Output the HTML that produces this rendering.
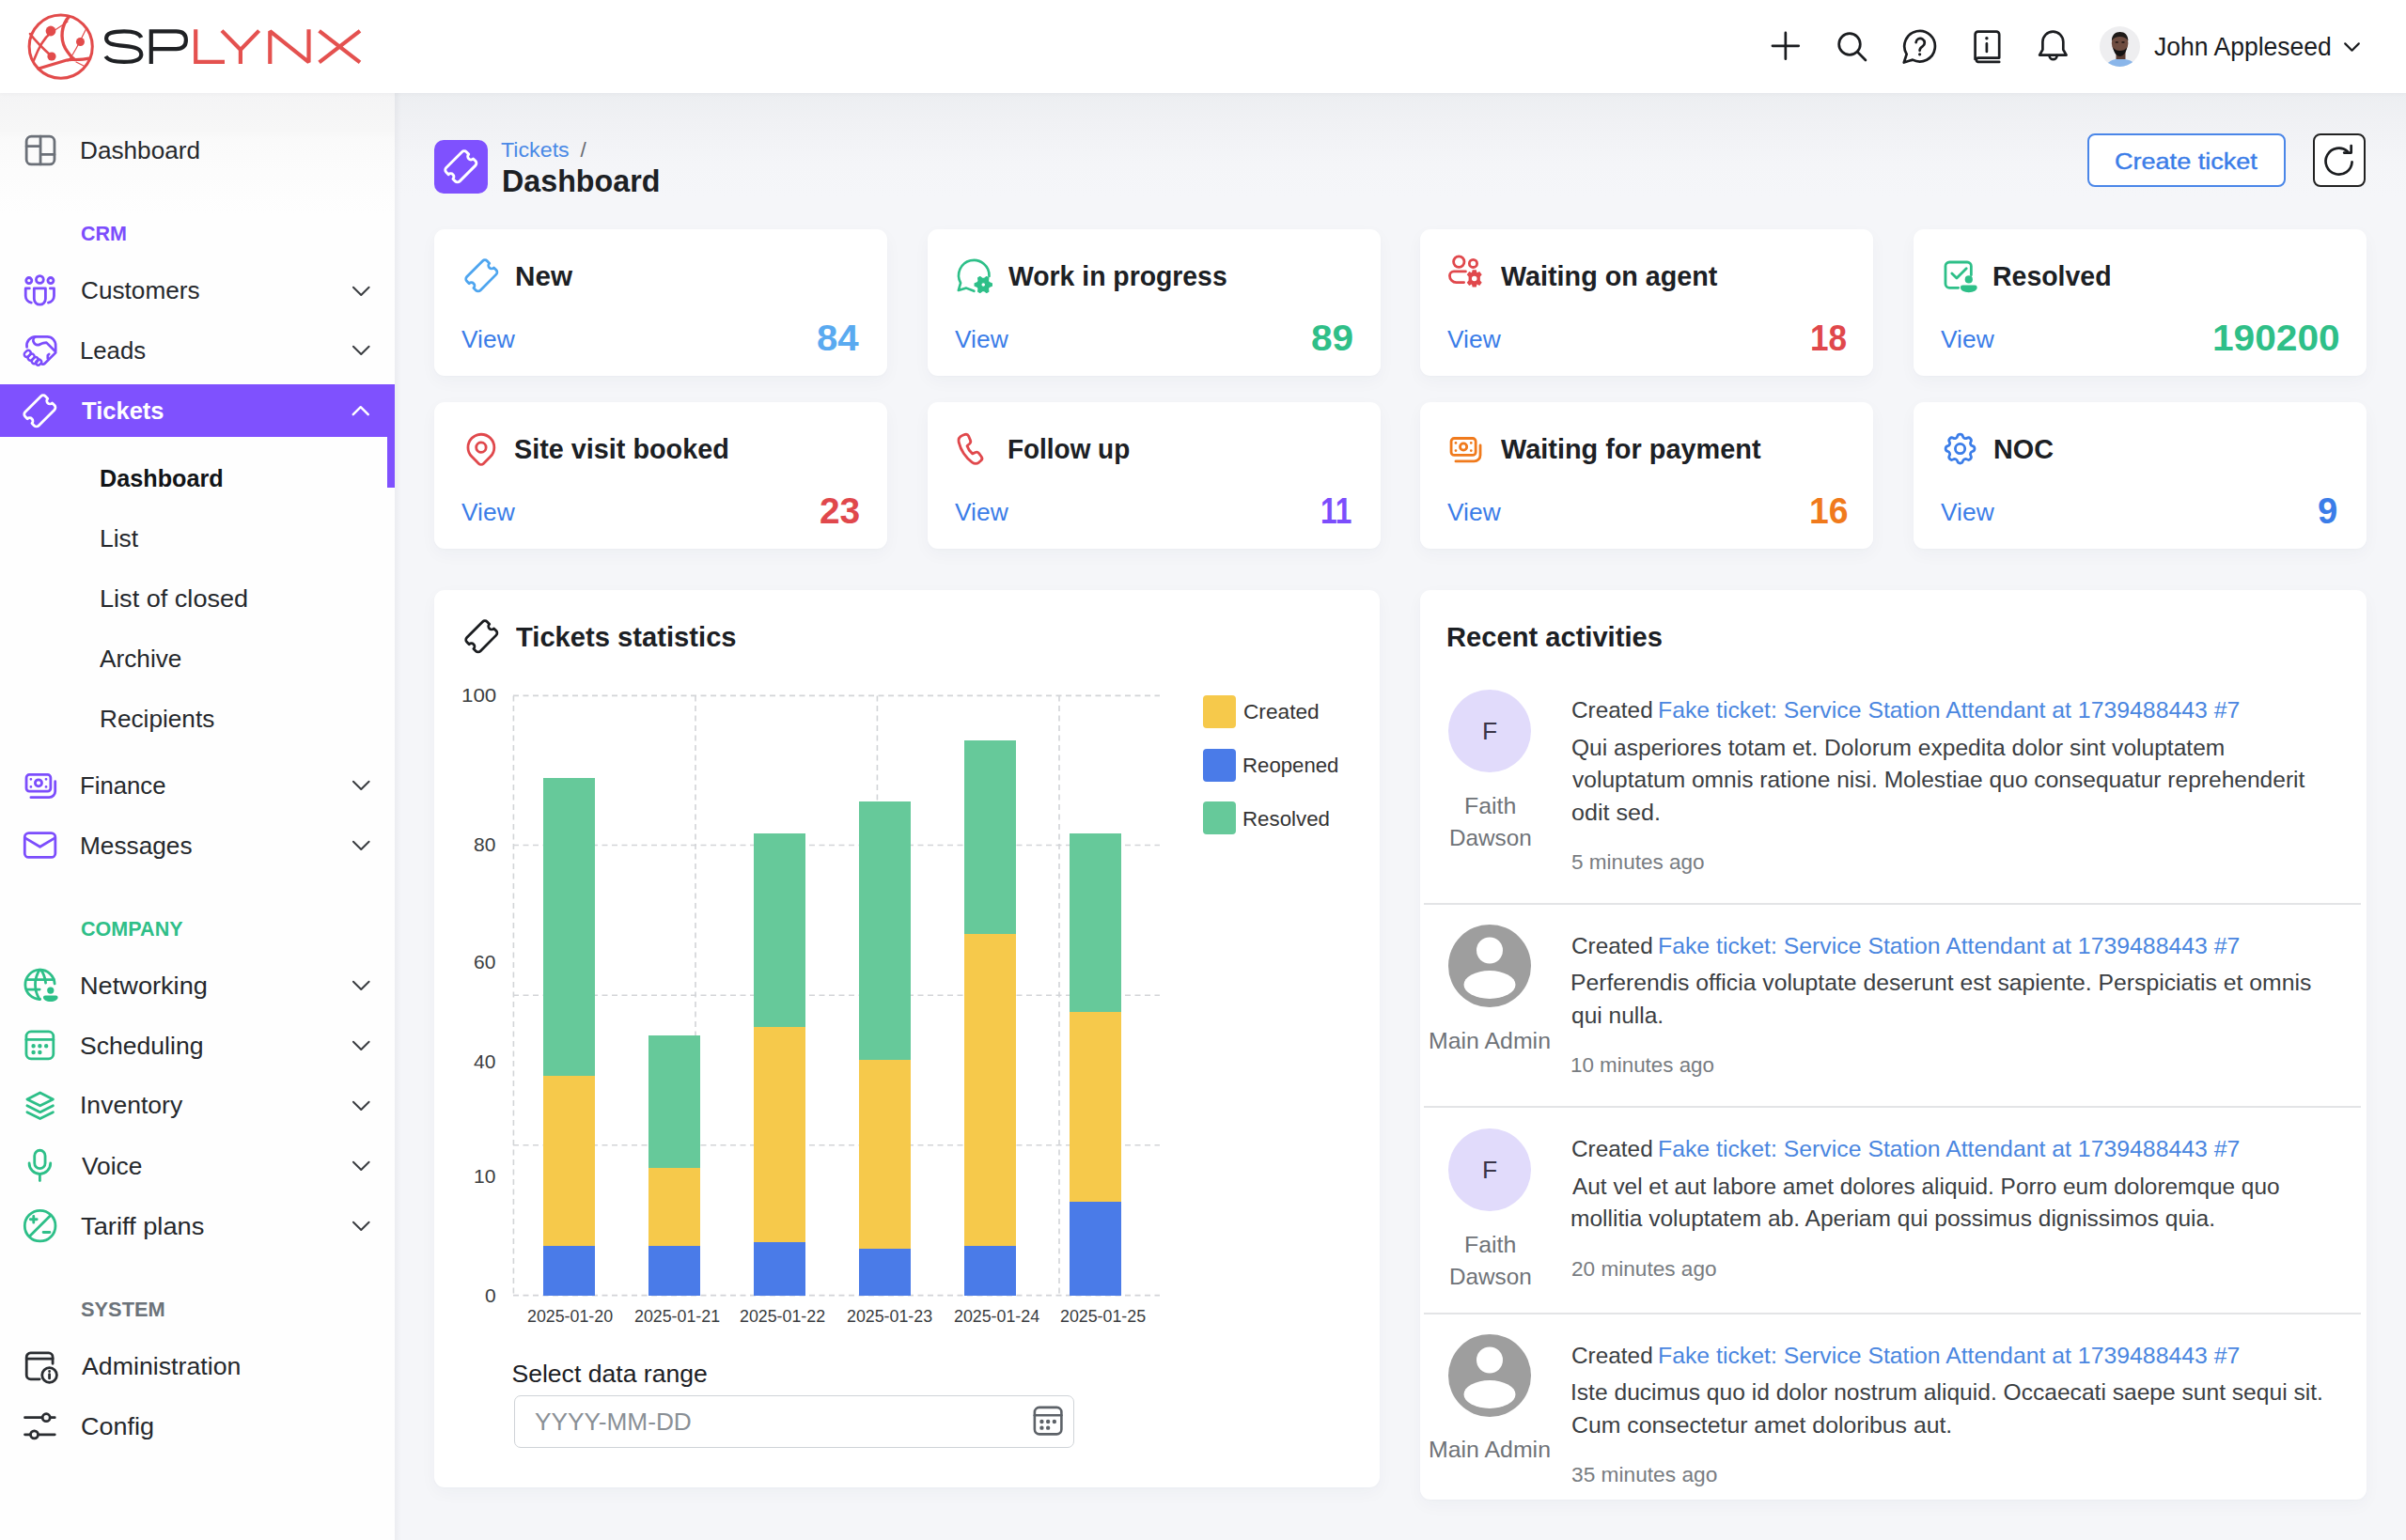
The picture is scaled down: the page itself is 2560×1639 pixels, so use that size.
<!DOCTYPE html><html><head><meta charset="utf-8"><style>
html,body{margin:0;padding:0}
body{width:2560px;height:1639px;overflow:hidden;position:relative;background:#f5f6f9;font-family:"Liberation Sans",sans-serif}
.b{position:absolute}
.ic{position:absolute;overflow:visible}
.t{position:absolute;white-space:pre;line-height:1;transform-origin:0 0}
</style></head><body>
<div class=b style="left:0px;top:99px;width:420px;height:1540px;background:linear-gradient(#f4f4f5 0px,#f7f7f7 40px,#fafafa 50px,#fcfcfc 85px,#fefefe 130px,#fefefe 100%)"></div>
<div class=b style="left:420px;top:99px;width:2140px;height:1540px;background:linear-gradient(#eceef1 0px,#f0f1f4 30px,#f4f5f8 75px,#f5f6f9 110px,#f5f6f9 100%)"></div>
<div class=b style="left:420px;top:99px;width:7px;height:1540px;background:linear-gradient(to right,rgba(30,30,60,.045),rgba(30,30,60,0))"></div>
<div class=b style="left:0px;top:0px;width:2560px;height:99px;background:#fff;box-shadow:0 1px 4px rgba(30,40,60,.035)"></div>
<svg class=ic style="left:28px;top:13px" width="72" height="72" viewBox="0 0 72 72" fill="none" stroke="#e24b4b" stroke-linecap="round">
<circle cx="36.7" cy="36.6" r="33.6" stroke-width="3"/>
<path d="M45.5 4.5c-8 9 -10 23 -4 34c3 5 6 9 10 12" stroke-width="3.4"/>
<path d="M52 50.5c6 0 11 -.5 15 -1.5" stroke-width="3"/>
<path d="M13 60c10 -3 20 -6 30 -9c3 -.8 6 -.8 9 -.5" stroke-width="3.2"/>
<path d="M4 23c6 8 12 14 22 23" stroke-width="2.6"/>
<path d="M26 22c-8 6 -13 16 -18 29" stroke-width="2.6"/>
<path d="M26 22l18 -12M57 31l7 -14M44 52c4 -4 8 -11 13 -21M53 53l8 4" stroke-width="1.2"/>
<circle cx="26" cy="20" r="5.4" fill="#e24b4b" stroke="none"/>
<circle cx="57.5" cy="31.5" r="4.5" fill="#e24b4b" stroke="none"/>
<circle cx="27" cy="47" r="4.6" fill="#e24b4b" stroke="none"/>
</svg>
<svg class=ic style="left:108px;top:28px" width="282" height="44" viewBox="0 0 282 44" fill="none" stroke-width="4.2" stroke-linecap="butt" stroke-linejoin="miter" stroke-miterlimit="2">
<path d="M42.3 12C40.5 7.5 34 5.3 24 5.3C12 5.3 5.1 7.5 5.1 12.8C5.1 18.5 11 19.6 24 20.8C36.5 22 42.3 24 42.3 30C42.3 35.8 36 37.9 24 37.9C12.5 37.9 6.5 35.5 4.4 32" stroke="#1f2124"/>
<path d="M52.8 40V5.3H79.5C86.5 5.3 89.9 8.5 89.9 14.7C89.9 21 86.5 24.1 79.5 24.1H52.8" stroke="#1f2124"/>
<path d="M100.2 3.2V37.9H131" stroke="#e4514f"/>
<path d="M128 4.6L147.9 25L167.6 4.6M147.9 25V40" stroke="#e4514f"/>
<path d="M179.3 40V5.2L220.5 38.2V3.2" stroke="#e4514f"/>
<path d="M231.6 4.8L275 38.4M275 4.8L231.6 38.4" stroke="#e4514f"/>
</svg>
<svg class=ic style="left:1879.15px;top:28.20px;color:#1b1d20" width="41.70" height="41.70" viewBox="0 0 24 24" fill="none" stroke="currentColor" stroke-width="1.554" stroke-linecap="round" stroke-linejoin="round"><path d="M12 4v16M4 12h16"/></svg>
<svg class=ic style="left:1951.12px;top:29.57px;color:#1b1d20" width="38.84" height="38.84" viewBox="0 0 24 24" fill="none" stroke="currentColor" stroke-width="1.668" stroke-linecap="round" stroke-linejoin="round"><circle cx="10.5" cy="10.5" r="7"/><path d="M15.8 15.8L21 21"/></svg>
<svg class=ic style="left:2015px;top:22px" width="200" height="55" viewBox="0 0 200 55" fill="none" stroke="#1b1d20" stroke-width="2.7" stroke-linecap="round" stroke-linejoin="round"><path d="M13.7 35.7A16.3 16.3 0 1 1 20 41.6L10.8 44.5Z"/><path d="M23.6 23.2A4.6 4.6 0 1 1 30.6 27.4C28.6 28.7 27.6 29.6 27.6 31.8"/><path d="M27.6 35.8v.01" stroke-width="3.2"/><path d="M86.6 41V14.7A3 3 0 0 1 89.6 11.7H109.2A3 3 0 0 1 112.2 14.7V39.6H89.6A2.2 2.2 0 0 0 89.6 43.9H112.2"/><path d="M98.9 18.7v.01" stroke-width="3.4"/><path d="M98.9 24.4V33"/><path d="M158.4 30.8V22.6A10.95 10.95 0 0 1 180.3 22.6V30.8L183.6 36.6H155.1Z"/><path d="M165.6 37.2A4 4 0 0 0 173.6 37.2"/></svg>
<svg class=ic style="left:2490.49px;top:36.91px;color:#1b1d20" width="25.03" height="25.03" viewBox="0 0 24 24" fill="none" stroke="currentColor" stroke-width="2.110" stroke-linecap="round" stroke-linejoin="round"><path d="M5 9l7 7l7 -7"/></svg>
<svg class=ic style="left:2234px;top:28px" width="43" height="43" viewBox="0 0 43 43">
<defs><clipPath id="avc"><circle cx="21.5" cy="21.5" r="21.5"/></clipPath></defs>
<g clip-path="url(#avc)"><rect width="43" height="43" fill="#eeeef0"/>
<path d="M7 41C10 36.5 16 34.6 21.6 34.2C27.5 34.6 33.5 35.8 37 39.5L38 43H7Z" fill="#8ab6ea"/>
<rect x="17.5" y="26" width="10" height="9" fill="#5a3d33"/>
<ellipse cx="21.6" cy="18" rx="8.8" ry="11" fill="#6e4c40"/>
<path d="M12.9 15.5C12.9 9 16.8 6 21.6 6C26.6 6 30.4 9 30.4 15.5C28.2 12 25.2 11 21.6 11C18 11 15 12 12.9 15.5Z" fill="#1e1a18"/>
<path d="M14.2 22.5C15.3 28.5 18.3 32 21.6 32C25 32 28 28.5 29.1 22.5C27.1 25 25 26 21.6 26C18.4 26 16.3 25 14.2 22.5Z" fill="#141212"/>
<ellipse cx="18.3" cy="17" rx="1.8" ry="1" fill="#2a1c18"/><ellipse cx="25" cy="17" rx="1.8" ry="1" fill="#2a1c18"/>
</g></svg>
<div class=b style="left:0px;top:409px;width:420px;height:56px;background:#7f51fe"></div>
<div class=b style="left:412px;top:465px;width:8px;height:54px;background:#7f51fe"></div>
<svg class=ic style="left:22.25px;top:139.35px;color:#6b7078" width="42.11" height="42.11" viewBox="0 0 24 24" fill="none" stroke="currentColor" stroke-width="1.596" stroke-linecap="round" stroke-linejoin="round"><rect x="3.5" y="3.5" width="17" height="17" rx="3"/><path d="M12 3.5v17M3.5 9.5h8.5M12 14.5h8.5"/></svg>
<svg class=ic style="left:21.34px;top:290.33px;color:#7c4dfc" width="42.72" height="42.72" viewBox="0 0 24 24" fill="none" stroke="currentColor" stroke-width="1.573" stroke-linecap="round" stroke-linejoin="round"><circle cx="5.5" cy="4.8" r="1.7"/><circle cx="12" cy="4.2" r="2.2"/><circle cx="18.5" cy="4.8" r="1.7"/><path d="M8.6 9.5h6.8v6.3a3.4 3.4 0 0 1 -6.8 0z"/><path d="M5.8 9.5h-2.3v4.6a4 4 0 0 0 3.4 3.9"/><path d="M18.2 9.5h2.3v4.6a4 4 0 0 1 -3.4 3.9"/></svg>
<svg class=ic style="left:22.24px;top:416.89px;color:#ffffff" width="40.71" height="40.71" viewBox="0 0 24 24" fill="none" stroke="currentColor" stroke-width="1.651" stroke-linecap="round" stroke-linejoin="round"><g transform="rotate(-45 12 12)"><path d="M5 6h14a2 2 0 0 1 2 2v2a2 2 0 0 0 0 4v2a2 2 0 0 1 -2 2h-14a2 2 0 0 1 -2 -2v-2a2 2 0 0 0 0 -4v-2a2 2 0 0 1 2 -2z"/></g></svg>
<svg class=ic style="left:23.62px;top:817.63px;color:#7c4dfc" width="38.76" height="38.76" viewBox="0 0 24 24" fill="none" stroke="currentColor" stroke-width="1.734" stroke-linecap="round" stroke-linejoin="round"><rect x="2.5" y="4" width="16" height="11" rx="2"/><circle cx="10.5" cy="9.5" r="2.2"/><path d="M5.5 7h.01M15.5 12h.01M5.5 12h.01M15.5 7h.01"/><path d="M21.5 8.5v6.5a4 4 0 0 1 -4 4h-12"/></svg>
<svg class=ic style="left:22.43px;top:878.83px;color:#7c4dfc" width="41.14" height="41.14" viewBox="0 0 24 24" fill="none" stroke="currentColor" stroke-width="1.633" stroke-linecap="round" stroke-linejoin="round"><rect x="2.5" y="4.5" width="19" height="15" rx="2.5"/><path d="M2.8 7.5l9.2 5.5l9.2 -5.5"/></svg>
<svg class=ic style="left:21.71px;top:1027.39px;color:#2dbf88" width="41.69" height="41.69" viewBox="0 0 24 24" fill="none" stroke="currentColor" stroke-width="1.612" stroke-linecap="round" stroke-linejoin="round"><path d="M20.8 11.5a9 9 0 1 0 -8.9 9.5"/><path d="M3.6 9h16.8M3.6 15h8"/><path d="M11.5 3a17 17 0 0 0 0 18"/><path d="M12.5 3a17 17 0 0 1 2.8 8"/><circle cx="18.3" cy="15.6" r="2.1" fill="currentColor" stroke="none"/><path d="M15 18.7h6.6a1.2 1.2 0 0 1 1.2 1.2c0 1.5 -2 2.6 -4.5 2.6s-4.5 -1.1 -4.5 -2.6a1.2 1.2 0 0 1 1.2 -1.2z" fill="currentColor" stroke="none"/></svg>
<svg class=ic style="left:22.21px;top:1092.46px;color:#2dbf88" width="40.77" height="40.77" viewBox="0 0 24 24" fill="none" stroke="currentColor" stroke-width="1.648" stroke-linecap="round" stroke-linejoin="round"><rect x="3.5" y="3.5" width="17" height="17" rx="3"/><path d="M3.5 8.5h17"/><path d="M8 12.5h.01M12 12.5h.01M16 12.5h.01M8 16.5h.01M12 16.5h.01" stroke-width="2.6"/></svg>
<svg class=ic style="left:21.63px;top:1156.64px;color:#2dbf88" width="41.34" height="41.34" viewBox="0 0 24 24" fill="none" stroke="currentColor" stroke-width="1.625" stroke-linecap="round" stroke-linejoin="round"><path d="M12 3.5l-8 4l8 4l8 -4z"/><path d="M4 11.5l8 4l8 -4"/><path d="M4 15.5l8 4l8 -4"/></svg>
<svg class=ic style="left:23.30px;top:1221.39px;color:#2dbf88" width="38.81" height="38.81" viewBox="0 0 24 24" fill="none" stroke="currentColor" stroke-width="1.732" stroke-linecap="round" stroke-linejoin="round"><rect x="8.5" y="2" width="7" height="12" rx="3.5"/><path d="M5 10.5a7 7 0 0 0 14 0"/><path d="M12 17.5v4.5"/></svg>
<svg class=ic style="left:21.91px;top:1284.06px;color:#2dbf88" width="41.28" height="41.28" viewBox="0 0 24 24" fill="none" stroke="currentColor" stroke-width="1.628" stroke-linecap="round" stroke-linejoin="round"><circle cx="12" cy="12" r="9.5"/><path d="M18.5 5.5l-13 13"/><path d="M8 6v4M6 8h4M14 16h4"/></svg>
<svg class=ic style="left:23.07px;top:1433.41px;color:#2a2d31" width="41.79" height="41.79" viewBox="0 0 24 24" fill="none" stroke="currentColor" stroke-width="1.608" stroke-linecap="round" stroke-linejoin="round"><path d="M11 20h-5.5a2.5 2.5 0 0 1 -2.5 -2.5v-11a2.5 2.5 0 0 1 2.5 -2.5h11a2.5 2.5 0 0 1 2.5 2.5v4"/><path d="M3 7.5h16"/><circle cx="17" cy="17.5" r="4.5"/><path d="M17 17v2.5M17 15.2v.01"/></svg>
<svg class=ic style="left:22.15px;top:1495.79px;color:#2a2d31" width="43.53" height="43.53" viewBox="0 0 24 24" fill="none" stroke="currentColor" stroke-width="1.544" stroke-linecap="round" stroke-linejoin="round"><path d="M2.5 7h17.5M2.5 17h17.5"/><circle cx="15" cy="7" r="2.2" fill="#fafafa"/><circle cx="8" cy="17" r="2.2" fill="#fafafa"/></svg>
<svg class=ic style="left:25px;top:357px" width="36" height="32" viewBox="0 0 36 32" fill="none" stroke="#7c4dfc" stroke-width="2.7" stroke-linecap="round" stroke-linejoin="round"><path d="M3.6 12.5C2.6 6.5 7 1.4 12.8 1.4H25.3C30.3 1.4 34.3 5.5 34.2 11V17"/><path d="M12.8 1.4C10.6 2.6 9.9 5.2 10.8 7.2C11.9 9.4 13.6 10.6 15.8 10.1C17.6 9.6 19.2 8.4 21 8.1L24.4 7.6L33.6 16.8"/><path d="M34.2 18.4L22.4 30C21.4 31 19.8 30.8 19 29.8"/><path d="M27.2 19.9L25.8 21.3V24.4"/><g stroke-width="2.4"><rect x="1.6" y="15.6" width="5.2" height="7.6" rx="2.6" transform="rotate(45 4.2 19.4)"/><rect x="5.6" y="19.4" width="5.2" height="7.6" rx="2.6" transform="rotate(45 8.2 23.2)"/><rect x="9.6" y="22.8" width="5.2" height="7.6" rx="2.6" transform="rotate(45 12.2 26.6)"/><rect x="13.6" y="25.4" width="5" height="6.4" rx="2.5" transform="rotate(45 16.1 28.6)"/></g></svg>
<svg class=ic style="left:369.78px;top:294.63px;color:#3a3d41" width="28.54" height="28.54" viewBox="0 0 24 24" fill="none" stroke="currentColor" stroke-width="1.682" stroke-linecap="round" stroke-linejoin="round"><path d="M5 9l7 7l7 -7"/></svg>
<svg class=ic style="left:369.78px;top:358.33px;color:#3a3d41" width="28.54" height="28.54" viewBox="0 0 24 24" fill="none" stroke="currentColor" stroke-width="1.682" stroke-linecap="round" stroke-linejoin="round"><path d="M5 9l7 7l7 -7"/></svg>
<svg class=ic style="left:369.78px;top:820.93px;color:#3a3d41" width="28.54" height="28.54" viewBox="0 0 24 24" fill="none" stroke="currentColor" stroke-width="1.682" stroke-linecap="round" stroke-linejoin="round"><path d="M5 9l7 7l7 -7"/></svg>
<svg class=ic style="left:369.78px;top:885.13px;color:#3a3d41" width="28.54" height="28.54" viewBox="0 0 24 24" fill="none" stroke="currentColor" stroke-width="1.682" stroke-linecap="round" stroke-linejoin="round"><path d="M5 9l7 7l7 -7"/></svg>
<svg class=ic style="left:369.78px;top:1033.53px;color:#3a3d41" width="28.54" height="28.54" viewBox="0 0 24 24" fill="none" stroke="currentColor" stroke-width="1.682" stroke-linecap="round" stroke-linejoin="round"><path d="M5 9l7 7l7 -7"/></svg>
<svg class=ic style="left:369.78px;top:1097.93px;color:#3a3d41" width="28.54" height="28.54" viewBox="0 0 24 24" fill="none" stroke="currentColor" stroke-width="1.682" stroke-linecap="round" stroke-linejoin="round"><path d="M5 9l7 7l7 -7"/></svg>
<svg class=ic style="left:369.78px;top:1161.63px;color:#3a3d41" width="28.54" height="28.54" viewBox="0 0 24 24" fill="none" stroke="currentColor" stroke-width="1.682" stroke-linecap="round" stroke-linejoin="round"><path d="M5 9l7 7l7 -7"/></svg>
<svg class=ic style="left:369.78px;top:1226.13px;color:#3a3d41" width="28.54" height="28.54" viewBox="0 0 24 24" fill="none" stroke="currentColor" stroke-width="1.682" stroke-linecap="round" stroke-linejoin="round"><path d="M5 9l7 7l7 -7"/></svg>
<svg class=ic style="left:369.78px;top:1290.13px;color:#3a3d41" width="28.54" height="28.54" viewBox="0 0 24 24" fill="none" stroke="currentColor" stroke-width="1.682" stroke-linecap="round" stroke-linejoin="round"><path d="M5 9l7 7l7 -7"/></svg>
<svg class=ic style="left:370.29px;top:423.82px;color:#ffffff" width="27.51" height="27.51" viewBox="0 0 24 24" fill="none" stroke="currentColor" stroke-width="2.093" stroke-linecap="round" stroke-linejoin="round"><path d="M5 15l7 -7l7 7"/></svg>
<div class=b style="left:462px;top:149px;width:57px;height:57px;background:#7f51fe;border-radius:10px"></div>
<svg class=ic style="left:470.32px;top:157.42px;color:#fff" width="40.65" height="40.65" viewBox="0 0 24 24" fill="none" stroke="currentColor" stroke-width="1.712" stroke-linecap="round" stroke-linejoin="round"><g transform="rotate(-45 12 12)"><path d="M5 6h14a2 2 0 0 1 2 2v2a2 2 0 0 0 0 4v2a2 2 0 0 1 -2 2h-14a2 2 0 0 1 -2 -2v-2a2 2 0 0 0 0 -4v-2a2 2 0 0 1 2 -2z"/></g></svg>
<div class=b style="left:2221px;top:142px;width:211px;height:57px;background:#fff;border:2px solid #4a86e8;border-radius:8px;box-sizing:border-box"></div>
<div class=b style="left:2461px;top:142px;width:56px;height:57px;background:#fff;border:2px solid #222;border-radius:8px;box-sizing:border-box"></div>
<svg class=ic style="left:2467.14px;top:149.95px;color:#1b1d20" width="43.13" height="43.13" viewBox="0 0 24 24" fill="none" stroke="currentColor" stroke-width="1.503" stroke-linecap="round" stroke-linejoin="round"><path d="M19.8 12.5a7.8 7.8 0 1 1 -2.6 -6.3"/><path d="M19.3 2.8v4.2h-4.2"/></svg>
<div class=b style="left:462px;top:244px;width:482px;height:156px;background:#fff;border-radius:11px;box-shadow:0 6px 18px rgba(40,50,80,.035),0 1px 3px rgba(40,50,80,.02)"></div>
<div class=b style="left:987px;top:244px;width:482px;height:156px;background:#fff;border-radius:11px;box-shadow:0 6px 18px rgba(40,50,80,.035),0 1px 3px rgba(40,50,80,.02)"></div>
<div class=b style="left:1511px;top:244px;width:482px;height:156px;background:#fff;border-radius:11px;box-shadow:0 6px 18px rgba(40,50,80,.035),0 1px 3px rgba(40,50,80,.02)"></div>
<div class=b style="left:2036px;top:244px;width:482px;height:156px;background:#fff;border-radius:11px;box-shadow:0 6px 18px rgba(40,50,80,.035),0 1px 3px rgba(40,50,80,.02)"></div>
<div class=b style="left:462px;top:428px;width:482px;height:156px;background:#fff;border-radius:11px;box-shadow:0 6px 18px rgba(40,50,80,.035),0 1px 3px rgba(40,50,80,.02)"></div>
<div class=b style="left:987px;top:428px;width:482px;height:156px;background:#fff;border-radius:11px;box-shadow:0 6px 18px rgba(40,50,80,.035),0 1px 3px rgba(40,50,80,.02)"></div>
<div class=b style="left:1511px;top:428px;width:482px;height:156px;background:#fff;border-radius:11px;box-shadow:0 6px 18px rgba(40,50,80,.035),0 1px 3px rgba(40,50,80,.02)"></div>
<div class=b style="left:2036px;top:428px;width:482px;height:156px;background:#fff;border-radius:11px;box-shadow:0 6px 18px rgba(40,50,80,.035),0 1px 3px rgba(40,50,80,.02)"></div>
<svg class=ic style="left:491.67px;top:272.67px;color:#4ea5ef" width="40.65" height="40.65" viewBox="0 0 24 24" fill="none" stroke="currentColor" stroke-width="1.653" stroke-linecap="round" stroke-linejoin="round"><g transform="rotate(-45 12 12)"><path d="M5 6h14a2 2 0 0 1 2 2v2a2 2 0 0 0 0 4v2a2 2 0 0 1 -2 2h-14a2 2 0 0 1 -2 -2v-2a2 2 0 0 0 0 -4v-2a2 2 0 0 1 2 -2z"/></g></svg>
<svg class=ic style="left:1538.12px;top:267.00px;color:#e0484c" width="42.88" height="42.88" viewBox="0 0 24 24" fill="none" stroke="currentColor" stroke-width="1.567" stroke-linecap="round" stroke-linejoin="round"><circle cx="8" cy="6.5" r="3.2"/><circle cx="16.5" cy="7.5" r="2.3"/><path d="M12 12.3h-7a2.5 2.5 0 0 0 -2.5 2.5a4 4 0 0 0 4 4h4.5"/><g transform="translate(17.2 16.5) scale(0.52)"><path fill="currentColor" stroke="none" fill-rule="evenodd" d="M-2.2 -9.8 L2.2 -9.8 L3 -6.6 L5.9 -8.1 L8.6 -4.6 L6.6 -2.2 L6.6 2.2 L8.6 4.6 L5.9 8.1 L3 6.6 L2.2 9.8 L-2.2 9.8 L-3 6.6 L-5.9 8.1 L-8.6 4.6 L-6.6 2.2 L-6.6 -2.2 L-8.6 -4.6 L-5.9 -8.1 L-3 -6.6 Z M0 -3 A3 3 0 1 0 0 3 A3 3 0 1 0 0 -3 Z"/></g></svg>
<svg class=ic style="left:2064.20px;top:272.97px;color:#2dbf88" width="41.06" height="41.06" viewBox="0 0 24 24" fill="none" stroke="currentColor" stroke-width="1.637" stroke-linecap="round" stroke-linejoin="round"><path d="M19.5 11.5v-5.5a2.5 2.5 0 0 0 -2.5 -2.5h-11a2.5 2.5 0 0 0 -2.5 2.5v11a2.5 2.5 0 0 0 2.5 2.5h5.5"/><path d="M7.5 10.5l3 3l6 -6"/><circle cx="18" cy="14.3" r="2.4" fill="currentColor" stroke="none"/><path d="M14.2 17.9h7.6a1.4 1.4 0 0 1 1.4 1.4c0 1.7 -2.3 3 -5.2 3s-5.2 -1.3 -5.2 -3a1.4 1.4 0 0 1 1.4 -1.4z" fill="currentColor" stroke="none"/></svg>
<svg class=ic style="left:491.24px;top:456.75px;color:#e0484c" width="41.82" height="41.82" viewBox="0 0 24 24" fill="none" stroke="currentColor" stroke-width="1.607" stroke-linecap="round" stroke-linejoin="round"><path d="M9 11a3 3 0 1 0 6 0a3 3 0 0 0 -6 0"/><path d="M17.657 16.657l-4.243 4.243a2 2 0 0 1 -2.827 0l-4.244 -4.243a8 8 0 1 1 11.314 0z"/></svg>
<svg class=ic style="left:1013.13px;top:458.29px;color:#e0484c" width="38.03" height="38.03" viewBox="0 0 24 24" fill="none" stroke="currentColor" stroke-width="1.767" stroke-linecap="round" stroke-linejoin="round"><path d="M7.2 3.3l1.5 -.5a2 2 0 0 1 2.4 1.1l1.2 2.8a2 2 0 0 1 -.5 2.3l-1.7 1.4a11 11 0 0 0 3.6 5.3l2 -.9a2 2 0 0 1 2.3 .6l1.7 2.3a2 2 0 0 1 -.3 2.7l-1.3 1.1c-1.3 1 -3.2 1 -4.6 0c-4.6 -3.4 -7.6 -8 -9 -13.5c-.4 -1.9 .4 -3.8 2.7 -4.7z"/></svg>
<svg class=ic style="left:1539.60px;top:460.26px;color:#f07a1c" width="39.11" height="39.11" viewBox="0 0 24 24" fill="none" stroke="currentColor" stroke-width="1.718" stroke-linecap="round" stroke-linejoin="round"><rect x="2.5" y="4" width="16" height="11" rx="2"/><circle cx="10.5" cy="9.5" r="2.2"/><path d="M5.5 7h.01M15.5 12h.01M5.5 12h.01M15.5 7h.01"/><path d="M21.5 8.5v6.5a4 4 0 0 1 -4 4h-12"/></svg>
<svg class=ic style="left:2064.66px;top:457.41px;color:#3b7de8" width="41.17" height="41.17" viewBox="0 0 24 24" fill="none" stroke="currentColor" stroke-width="1.632" stroke-linecap="round" stroke-linejoin="round"><path d="M10.325 4.317c.426 -1.756 2.924 -1.756 3.35 0a1.724 1.724 0 0 0 2.573 1.066c1.543 -.94 3.31 .826 2.37 2.37a1.724 1.724 0 0 0 1.065 2.572c1.756 .426 1.756 2.924 0 3.35a1.724 1.724 0 0 0 -1.066 2.573c.94 1.543 -.826 3.31 -2.37 2.37a1.724 1.724 0 0 0 -2.572 1.065c-.426 1.756 -2.924 1.756 -3.35 0a1.724 1.724 0 0 0 -2.573 -1.066c-1.543 .94 -3.31 -.826 -2.37 -2.37a1.724 1.724 0 0 0 -1.065 -2.572c-1.756 -.426 -1.756 -2.924 0 -3.35a1.724 1.724 0 0 0 1.066 -2.573c-.94 -1.543 .826 -3.31 2.37 -2.37c1 .608 2.296 .07 2.572 -1.065z"/><circle cx="12" cy="12" r="3"/></svg>
<svg class=ic style="left:1010px;top:265px" width="60" height="55" viewBox="0 0 60 55" fill="none" stroke="#2dbf88" stroke-width="2.6" stroke-linecap="round" stroke-linejoin="round"><path d="M42.5 29A16.25 16.25 0 1 0 12.1 36.1L9.8 44L18.2 41.6L26.4 44.8"/><path fill="#2dbf88" stroke="#2dbf88" stroke-width="1.2" fill-rule="evenodd" d="M45.37 36.80 L45.37 39.20 L42.35 40.53 L41.49 42.02 L41.85 45.30 L39.77 46.50 L37.11 44.54 L35.39 44.54 L32.73 46.50 L30.65 45.30 L31.01 42.02 L30.15 40.53 L27.13 39.20 L27.13 36.80 L30.15 35.47 L31.01 33.98 L30.65 30.70 L32.73 29.50 L35.39 31.46 L37.11 31.46 L39.77 29.50 L41.85 30.70 L41.49 33.98 L42.35 35.47 Z M38.65 38 A2.4 2.4 0 1 0 33.85 38 A2.4 2.4 0 1 0 38.65 38 Z"/></svg>
<div class=b style="left:462px;top:628px;width:1006px;height:955px;background:#fff;border-radius:11px;box-shadow:0 6px 18px rgba(40,50,80,.035),0 1px 3px rgba(40,50,80,.02)"></div>
<svg class=ic style="left:491.67px;top:656.67px;color:#1b1d20" width="40.65" height="40.65" viewBox="0 0 24 24" fill="none" stroke="currentColor" stroke-width="1.653" stroke-linecap="round" stroke-linejoin="round"><g transform="rotate(-45 12 12)"><path d="M5 6h14a2 2 0 0 1 2 2v2a2 2 0 0 0 0 4v2a2 2 0 0 1 -2 2h-14a2 2 0 0 1 -2 -2v-2a2 2 0 0 0 0 -4v-2a2 2 0 0 1 2 -2z"/></g></svg>
<svg class=ic style="left:0;top:0" width="2560" height="1639" stroke="#d2d4d7" stroke-width="1.6" stroke-dasharray="6 4.5"><line x1="546" y1="740.4" x2="1234" y2="740.4"/><line x1="546" y1="899.5" x2="1234" y2="899.5"/><line x1="546" y1="1059.2" x2="1234" y2="1059.2"/><line x1="546" y1="1218.8" x2="1234" y2="1218.8"/><line x1="546" y1="1378.6" x2="1234" y2="1378.6"/><line x1="546.4" y1="740.4" x2="546.4" y2="1378.6"/><line x1="740" y1="740.4" x2="740" y2="1378.6"/><line x1="933.4" y1="740.4" x2="933.4" y2="1378.6"/><line x1="1127" y1="740.4" x2="1127" y2="1378.6"/></svg>
<svg class=ic style="left:0;top:0" width="2560" height="1639" shape-rendering="crispEdges"><rect x="577.7" y="828" width="55" height="317.29999999999995" fill="#66c99a"/><rect x="577.7" y="1144.8" width="55" height="181.70000000000005" fill="#f6c94b"/><rect x="577.7" y="1326" width="55" height="52.59999999999991" fill="#4a7be8"/><rect x="690" y="1102.3" width="55" height="140.70000000000005" fill="#66c99a"/><rect x="690" y="1242.5" width="55" height="84.0" fill="#f6c94b"/><rect x="690" y="1326" width="55" height="52.59999999999991" fill="#4a7be8"/><rect x="802" y="887" width="55" height="206.5" fill="#66c99a"/><rect x="802" y="1093" width="55" height="229.5" fill="#f6c94b"/><rect x="802" y="1322" width="55" height="56.59999999999991" fill="#4a7be8"/><rect x="913.8" y="853" width="55" height="275.5" fill="#66c99a"/><rect x="913.8" y="1128" width="55" height="201.20000000000005" fill="#f6c94b"/><rect x="913.8" y="1328.7" width="55" height="49.899999999999864" fill="#4a7be8"/><rect x="1026" y="787.8" width="55" height="206.5" fill="#66c99a"/><rect x="1026" y="993.8" width="55" height="332.70000000000005" fill="#f6c94b"/><rect x="1026" y="1326" width="55" height="52.59999999999991" fill="#4a7be8"/><rect x="1138" y="887" width="55" height="190.5" fill="#66c99a"/><rect x="1138" y="1077" width="55" height="202.5" fill="#f6c94b"/><rect x="1138" y="1279" width="55" height="99.59999999999991" fill="#4a7be8"/></svg>
<div class=b style="left:1280px;top:740px;width:35px;height:35px;background:#f6c94b;border-radius:4px"></div>
<div class=b style="left:1280px;top:797px;width:35px;height:35px;background:#4a7be8;border-radius:4px"></div>
<div class=b style="left:1280px;top:853px;width:35px;height:35px;background:#66c99a;border-radius:4px"></div>
<div class=b style="left:547px;top:1485px;width:596px;height:56px;background:#fff;border:1.5px solid #cfd3d7;border-radius:7px;box-sizing:border-box"></div>
<svg class=ic style="left:1095.16px;top:1492.21px;color:#5d6268" width="40.28" height="40.28" viewBox="0 0 24 24" fill="none" stroke="currentColor" stroke-width="1.549" stroke-linecap="round" stroke-linejoin="round"><rect x="3.5" y="3.5" width="17" height="17" rx="3"/><path d="M3.5 8.5h17"/><path d="M8 12.5h.01M12 12.5h.01M16 12.5h.01M8 16.5h.01M12 16.5h.01" stroke-width="2.6"/></svg>
<div class=b style="left:1511px;top:628px;width:1007px;height:968px;background:#fff;border-radius:11px;box-shadow:0 6px 18px rgba(40,50,80,.035),0 1px 3px rgba(40,50,80,.02)"></div>
<div class=b style="left:1515px;top:961px;width:997px;height:2px;background:#e3e4e6"></div>
<div class=b style="left:1515px;top:1177px;width:997px;height:2px;background:#e3e4e6"></div>
<div class=b style="left:1515px;top:1397px;width:997px;height:2px;background:#e3e4e6"></div>
<div class=b style="left:1541px;top:734px;width:88px;height:88px;background:#e1dbfb;border-radius:50%"></div>
<div class=t style="left:1541px;top:734px;width:88px;height:88px;line-height:88px;text-align:center;font-size:26.5px;color:#3a3547">F</div>
<svg class=ic style="left:1541px;top:984.4px" width="88" height="88" viewBox="0 0 88 88"><circle cx="44" cy="44" r="44" fill="#9e9e9e"/><circle cx="44" cy="27.5" r="14" fill="#fff"/><ellipse cx="44" cy="64" rx="27.5" ry="15" fill="#fff"/></svg>
<div class=b style="left:1541px;top:1201px;width:88px;height:88px;background:#e1dbfb;border-radius:50%"></div>
<div class=t style="left:1541px;top:1201px;width:88px;height:88px;line-height:88px;text-align:center;font-size:26.5px;color:#3a3547">F</div>
<svg class=ic style="left:1541px;top:1419.7px" width="88" height="88" viewBox="0 0 88 88"><circle cx="44" cy="44" r="44" fill="#9e9e9e"/><circle cx="44" cy="27.5" r="14" fill="#fff"/><ellipse cx="44" cy="64" rx="27.5" ry="15" fill="#fff"/></svg>
<div class=t style='left:2291.51px;top:37.09px;font-size:26.76px;font-weight:400;color:#1a1c1f;transform:scaleX(0.9920);'>John Appleseed</div>
<div class=t style='left:533.47px;top:148.95px;font-size:22.55px;font-weight:400;color:#4a89e6;transform:scaleX(1.0305);'>Tickets</div>
<div class=t style='left:617.40px;top:148.99px;font-size:22.5px;font-weight:400;color:#666a70;'>/</div>
<div class=t style='left:534.17px;top:175.73px;font-size:33.45px;font-weight:700;color:#1c2024;transform:scaleX(0.9643);'>Dashboard</div>
<div class=t style='left:2249.91px;top:160.20px;font-size:24.73px;font-weight:400;color:#3b7de8;transform:scaleX(1.0942);-webkit-text-stroke:0.4px currentColor;'>Create ticket</div>
<div class=t style='left:547.84px;top:279.14px;font-size:30.25px;font-weight:700;color:#1c2024;transform:scaleX(0.9801);'>New</div>
<div class=t style='left:491.19px;top:348.01px;font-size:26.5px;font-weight:400;color:#3b7de8;transform:scaleX(0.9951);'>View</div>
<div class=t style='left:869.35px;top:341.14px;font-size:38.3px;font-weight:700;color:#5aaaf0;transform:scaleX(1.0488);'>84</div>
<div class=t style='left:1072.70px;top:279.14px;font-size:30.25px;font-weight:700;color:#1c2024;transform:scaleX(0.9373);'>Work in progress</div>
<div class=t style='left:1016.19px;top:348.01px;font-size:26.5px;font-weight:400;color:#3b7de8;transform:scaleX(0.9951);'>View</div>
<div class=t style='left:1395.04px;top:341.14px;font-size:38.3px;font-weight:700;color:#2fbf88;transform:scaleX(1.0601);'>89</div>
<div class=t style='left:1596.70px;top:279.14px;font-size:30.25px;font-weight:700;color:#1c2024;transform:scaleX(0.9500);'>Waiting on agent</div>
<div class=t style='left:1540.19px;top:348.01px;font-size:26.5px;font-weight:400;color:#3b7de8;transform:scaleX(0.9951);'>View</div>
<div class=t style='left:1925.97px;top:341.14px;font-size:38.3px;font-weight:700;color:#e0484c;transform:scaleX(0.9183);'>18</div>
<div class=t style='left:2120.22px;top:279.14px;font-size:30.25px;font-weight:700;color:#1c2024;transform:scaleX(0.9412);'>Resolved</div>
<div class=t style='left:2065.19px;top:348.01px;font-size:26.5px;font-weight:400;color:#3b7de8;transform:scaleX(0.9951);'>View</div>
<div class=t style='left:2353.77px;top:341.14px;font-size:38.3px;font-weight:700;color:#2fbf88;transform:scaleX(1.0621);'>190200</div>
<div class=t style='left:547.45px;top:463.14px;font-size:30.25px;font-weight:700;color:#1c2024;transform:scaleX(0.9517);'>Site visit booked</div>
<div class=t style='left:491.19px;top:532.01px;font-size:26.5px;font-weight:400;color:#3b7de8;transform:scaleX(0.9951);'>View</div>
<div class=t style='left:871.58px;top:525.14px;font-size:38.3px;font-weight:700;color:#e0484c;transform:scaleX(1.0153);'>23</div>
<div class=t style='left:1071.85px;top:463.14px;font-size:30.25px;font-weight:700;color:#1c2024;transform:scaleX(0.9225);'>Follow up</div>
<div class=t style='left:1016.19px;top:532.01px;font-size:26.5px;font-weight:400;color:#3b7de8;transform:scaleX(0.9951);'>View</div>
<div class=t style='left:1405.35px;top:525.14px;font-size:38.3px;font-weight:700;color:#7c4dfc;transform:scaleX(0.8268);'>11</div>
<div class=t style='left:1596.70px;top:463.14px;font-size:30.25px;font-weight:700;color:#1c2024;transform:scaleX(0.9550);'>Waiting for payment</div>
<div class=t style='left:1540.19px;top:532.01px;font-size:26.5px;font-weight:400;color:#3b7de8;transform:scaleX(0.9951);'>View</div>
<div class=t style='left:1924.55px;top:525.14px;font-size:38.3px;font-weight:700;color:#f07a1c;transform:scaleX(0.9744);'>16</div>
<div class=t style='left:2121.19px;top:463.14px;font-size:30.25px;font-weight:700;color:#1c2024;transform:scaleX(0.9517);'>NOC</div>
<div class=t style='left:2065.19px;top:532.01px;font-size:26.5px;font-weight:400;color:#3b7de8;transform:scaleX(0.9951);'>View</div>
<div class=t style='left:2465.90px;top:525.14px;font-size:38.3px;font-weight:700;color:#3b7de8;'>9</div>
<div class=t style='left:85.17px;top:147.90px;font-size:25.8px;font-weight:400;color:#25282c;transform:scaleX(1.0148);'>Dashboard</div>
<div class=t style='left:86.08px;top:297.20px;font-size:25.8px;font-weight:400;color:#25282c;transform:scaleX(1.0155);'>Customers</div>
<div class=t style='left:85.21px;top:361.00px;font-size:25.8px;font-weight:400;color:#25282c;transform:scaleX(0.9971);'>Leads</div>
<div class=t style='left:85.20px;top:824.00px;font-size:25.8px;font-weight:400;color:#25282c;transform:scaleX(0.9968);'>Finance</div>
<div class=t style='left:85.17px;top:887.70px;font-size:25.8px;font-weight:400;color:#25282c;transform:scaleX(1.0165);'>Messages</div>
<div class=t style='left:85.09px;top:1037.00px;font-size:25.8px;font-weight:400;color:#25282c;transform:scaleX(1.0528);'>Networking</div>
<div class=t style='left:85.04px;top:1100.70px;font-size:25.8px;font-weight:400;color:#25282c;transform:scaleX(1.0298);'>Scheduling</div>
<div class=t style='left:85.14px;top:1164.20px;font-size:25.8px;font-weight:400;color:#25282c;transform:scaleX(1.0288);'>Inventory</div>
<div class=t style='left:86.60px;top:1228.60px;font-size:25.8px;font-weight:400;color:#25282c;transform:scaleX(1.0210);'>Voice</div>
<div class=t style='left:85.54px;top:1292.70px;font-size:25.8px;font-weight:400;color:#25282c;transform:scaleX(1.0574);'>Tariff plans</div>
<div class=t style='left:86.60px;top:1442.20px;font-size:25.8px;font-weight:400;color:#25282c;transform:scaleX(1.0364);'>Administration</div>
<div class=t style='left:86.05px;top:1506.20px;font-size:25.8px;font-weight:400;color:#25282c;transform:scaleX(1.0458);'>Config</div>
<div class=t style='left:86.50px;top:425.44px;font-size:25.4px;font-weight:700;color:#ffffff;transform:scaleX(1.0058);'>Tickets</div>
<div class=t style='left:85.54px;top:237.94px;font-size:22.2px;font-weight:700;color:#7c4dfc;transform:scaleX(0.9689);'>CRM</div>
<div class=t style='left:85.53px;top:977.74px;font-size:22.2px;font-weight:700;color:#2fbf88;transform:scaleX(0.9718);'>COMPANY</div>
<div class=t style='left:85.51px;top:1382.74px;font-size:22.2px;font-weight:700;color:#6c737a;transform:scaleX(0.9832);'>SYSTEM</div>
<div class=t style='left:106.05px;top:497.20px;font-size:25.8px;font-weight:700;color:#111417;transform:scaleX(0.9771);'>Dashboard</div>
<div class=t style='left:105.95px;top:560.70px;font-size:25.8px;font-weight:400;color:#25282c;transform:scaleX(1.0263);'>List</div>
<div class=t style='left:105.90px;top:625.00px;font-size:25.8px;font-weight:400;color:#25282c;transform:scaleX(1.0503);'>List of closed</div>
<div class=t style='left:106.40px;top:688.70px;font-size:25.8px;font-weight:400;color:#25282c;transform:scaleX(1.0165);'>Archive</div>
<div class=t style='left:105.97px;top:752.70px;font-size:25.8px;font-weight:400;color:#25282c;transform:scaleX(1.0153);'>Recipients</div>
<div class=t style='left:549.00px;top:662.82px;font-size:29.8px;font-weight:700;color:#1c2024;transform:scaleX(0.9790);'>Tickets statistics</div>
<div class=t style='left:544.40px;top:1448.62px;font-size:26.6px;font-weight:400;color:#1c2024;'>Select data range</div>
<div class=t style='left:569.11px;top:1500.32px;font-size:26.6px;font-weight:400;color:#8a9096;transform:scaleX(0.9874);'>YYYY-MM-DD</div>
<div class=t style='left:1322.96px;top:746.78px;font-size:21.8px;font-weight:400;color:#333;transform:scaleX(1.0400);'>Created</div>
<div class=t style='left:1321.96px;top:803.78px;font-size:21.8px;font-weight:400;color:#333;transform:scaleX(1.0186);'>Reopened</div>
<div class=t style='left:1321.95px;top:860.78px;font-size:21.8px;font-weight:400;color:#333;transform:scaleX(1.0227);'>Resolved</div>
<div class=t style='left:490.88px;top:728.65px;font-size:21.0px;font-weight:400;color:#3a3d40;transform:scaleX(1.0625);'>100</div>
<div class=t style='left:504.00px;top:888.25px;font-size:21.0px;font-weight:400;color:#3a3d40;'>80</div>
<div class=t style='left:504.00px;top:1012.75px;font-size:21.0px;font-weight:400;color:#3a3d40;'>60</div>
<div class=t style='left:504.00px;top:1119.26px;font-size:21.0px;font-weight:400;color:#3a3d40;'>40</div>
<div class=t style='left:504.00px;top:1241.05px;font-size:21.0px;font-weight:400;color:#3a3d40;'>10</div>
<div class=t style='left:516.00px;top:1367.76px;font-size:21.0px;font-weight:400;color:#3a3d40;'>0</div>
<div class=t style='left:560.98px;top:1392.71px;font-size:17.5px;font-weight:400;color:#3a3d40;transform:scaleX(1.0171);'>2025-01-20</div>
<div class=t style='left:675.19px;top:1392.71px;font-size:17.5px;font-weight:400;color:#3a3d40;transform:scaleX(1.0171);'>2025-01-21</div>
<div class=t style='left:786.98px;top:1392.71px;font-size:17.5px;font-weight:400;color:#3a3d40;transform:scaleX(1.0171);'>2025-01-22</div>
<div class=t style='left:900.78px;top:1392.71px;font-size:17.5px;font-weight:400;color:#3a3d40;transform:scaleX(1.0171);'>2025-01-23</div>
<div class=t style='left:1015.09px;top:1392.71px;font-size:17.5px;font-weight:400;color:#3a3d40;transform:scaleX(1.0171);'>2025-01-24</div>
<div class=t style='left:1128.19px;top:1392.71px;font-size:17.5px;font-weight:400;color:#3a3d40;transform:scaleX(1.0171);'>2025-01-25</div>
<div class=t style='left:1539.24px;top:662.82px;font-size:29.8px;font-weight:700;color:#1c2024;transform:scaleX(0.9776);'>Recent activities</div>
<div class=t style='left:1671.99px;top:744.35px;font-size:24.2px;font-weight:400;color:#3b3e42;transform:scaleX(1.0073);'>Created</div>
<div class=t style='left:1763.95px;top:744.35px;font-size:24.2px;font-weight:400;color:#4a86e0;transform:scaleX(1.0258);'>Fake ticket: Service Station Attendant at 1739488443 #7</div>
<div class=t style='left:1672.08px;top:783.85px;font-size:24.2px;font-weight:400;color:#3b3e42;transform:scaleX(1.0161);'>Qui asperiores totam et. Dolorum expedita dolor sint voluptatem</div>
<div class=t style='left:1673.10px;top:818.35px;font-size:24.2px;font-weight:400;color:#3b3e42;transform:scaleX(1.0152);'>voluptatum omnis ratione nisi. Molestiae quo consequatur reprehenderit</div>
<div class=t style='left:1672.07px;top:852.85px;font-size:24.2px;font-weight:400;color:#3b3e42;transform:scaleX(1.0376);'>odit sed.</div>
<div class=t style='left:1671.88px;top:907.31px;font-size:22.0px;font-weight:400;color:#787c81;transform:scaleX(1.0250);'>5 minutes ago</div>
<div class=t style='left:1557.94px;top:846.25px;font-size:24.2px;font-weight:400;color:#6f7378;transform:scaleX(1.0301);'>Faith</div>
<div class=t style='left:1541.59px;top:879.55px;font-size:24.2px;font-weight:400;color:#6f7378;transform:scaleX(1.0048);'>Dawson</div>
<div class=t style='left:1671.99px;top:994.95px;font-size:24.2px;font-weight:400;color:#3b3e42;transform:scaleX(1.0073);'>Created</div>
<div class=t style='left:1763.95px;top:994.95px;font-size:24.2px;font-weight:400;color:#4a86e0;transform:scaleX(1.0258);'>Fake ticket: Service Station Attendant at 1739488443 #7</div>
<div class=t style='left:1671.06px;top:1034.45px;font-size:24.2px;font-weight:400;color:#3b3e42;transform:scaleX(1.0220);'>Perferendis officia voluptate deserunt est sapiente. Perspiciatis et omnis</div>
<div class=t style='left:1672.09px;top:1068.95px;font-size:24.2px;font-weight:400;color:#3b3e42;transform:scaleX(1.0138);'>qui nulla.</div>
<div class=t style='left:1670.87px;top:1123.41px;font-size:22.0px;font-weight:400;color:#787c81;transform:scaleX(1.0169);'>10 minutes ago</div>
<div class=t style='left:1519.94px;top:1096.45px;font-size:24.2px;font-weight:400;color:#6f7378;transform:scaleX(1.0285);'>Main Admin</div>
<div class=t style='left:1671.99px;top:1211.35px;font-size:24.2px;font-weight:400;color:#3b3e42;transform:scaleX(1.0073);'>Created</div>
<div class=t style='left:1763.95px;top:1211.35px;font-size:24.2px;font-weight:400;color:#4a86e0;transform:scaleX(1.0258);'>Fake ticket: Service Station Attendant at 1739488443 #7</div>
<div class=t style='left:1673.10px;top:1250.85px;font-size:24.2px;font-weight:400;color:#3b3e42;transform:scaleX(1.0085);'>Aut vel et aut labore amet dolores aliquid. Porro eum doloremque quo</div>
<div class=t style='left:1671.07px;top:1285.35px;font-size:24.2px;font-weight:400;color:#3b3e42;transform:scaleX(1.0144);'>mollitia voluptatem ab. Aperiam qui possimus dignissimos quia.</div>
<div class=t style='left:1671.87px;top:1339.81px;font-size:22.0px;font-weight:400;color:#787c81;transform:scaleX(1.0275);'>20 minutes ago</div>
<div class=t style='left:1557.94px;top:1313.25px;font-size:24.2px;font-weight:400;color:#6f7378;transform:scaleX(1.0301);'>Faith</div>
<div class=t style='left:1541.59px;top:1346.55px;font-size:24.2px;font-weight:400;color:#6f7378;transform:scaleX(1.0048);'>Dawson</div>
<div class=t style='left:1671.99px;top:1430.55px;font-size:24.2px;font-weight:400;color:#3b3e42;transform:scaleX(1.0073);'>Created</div>
<div class=t style='left:1763.95px;top:1430.55px;font-size:24.2px;font-weight:400;color:#4a86e0;transform:scaleX(1.0258);'>Fake ticket: Service Station Attendant at 1739488443 #7</div>
<div class=t style='left:1671.07px;top:1470.05px;font-size:24.2px;font-weight:400;color:#3b3e42;transform:scaleX(1.0165);'>Iste ducimus quo id dolor nostrum aliquid. Occaecati saepe sunt sequi sit.</div>
<div class=t style='left:1672.07px;top:1504.55px;font-size:24.2px;font-weight:400;color:#3b3e42;transform:scaleX(1.0253);'>Cum consectetur amet doloribus aut.</div>
<div class=t style='left:1671.87px;top:1559.01px;font-size:22.0px;font-weight:400;color:#787c81;transform:scaleX(1.0322);'>35 minutes ago</div>
<div class=t style='left:1519.94px;top:1531.35px;font-size:24.2px;font-weight:400;color:#6f7378;transform:scaleX(1.0285);'>Main Admin</div>
</body></html>
